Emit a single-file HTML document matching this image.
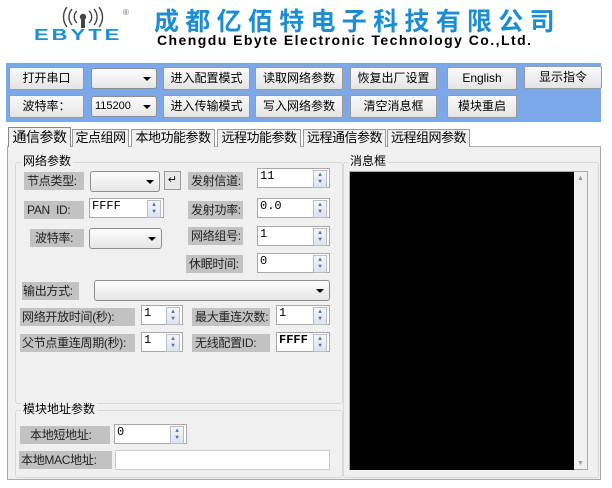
<!DOCTYPE html>
<html><head><meta charset="utf-8"><style>
*{box-sizing:border-box;margin:0;padding:0}
body{width:612px;height:488px;background:#fff;position:relative;overflow:hidden;font-family:"Liberation Sans","Noto Sans CJK SC",sans-serif;font-size:12px;color:#000}
.a{position:absolute}
.btn{position:absolute;height:23px;border:1px solid #9a9a9a;border-radius:2px;background:linear-gradient(#fafafa,#e4e4e4);text-align:center;line-height:21px;font-size:12px}
.cb{position:absolute;height:21px;border:1px solid #8e8e8e;border-radius:3px;background:linear-gradient(#fdfdfd,#e6e6e6);font-size:11px;line-height:19px;padding-left:3px}
.cb:after{content:"";position:absolute;right:5px;top:8px;border:4px solid transparent;border-top:4px solid #000;border-bottom:0}
.lb{position:absolute;background:#c2c2c2;height:18px;line-height:18px;font-size:12px;color:#222;padding-left:3px;white-space:nowrap;overflow:hidden;letter-spacing:-0.3px}
.sp{position:absolute;height:20px;border:1px solid #a8a8a8;background:#fff;font-family:"Liberation Mono","Noto Sans CJK SC",monospace;font-size:12px;line-height:15px;padding-left:2px}
.sp:after{content:"▲\A▼";white-space:pre;position:absolute;right:2px;top:1px;width:12px;height:16px;border:1px solid #b8bcc8;background:linear-gradient(#f4f6fa,#dde3ee);font-size:6px;line-height:7px;text-align:center;color:#5a6a9a}
.tab{position:absolute;top:129px;height:18px;border:1px solid #999;border-bottom:none;background:#f0f0f0;font-size:13px;line-height:16px;text-align:center;white-space:nowrap;letter-spacing:-0.5px}
</style></head><body>
<svg class="a" style="left:55px;top:7px" width="56" height="22" viewBox="0 0 56 22" fill="none" stroke="#444" stroke-width="1.4">
<path d="M22 4a8 8 0 0 0 0 12M17 2a12 12 0 0 0 0 16M12 0a16 16 0 0 0 0 20M34 4a8 8 0 0 1 0 12M39 2a12 12 0 0 1 0 16M44 0a16 16 0 0 1 0 20"/>
<circle cx="28" cy="10" r="2.5" fill="#444"/><rect x="26" y="13" width="4" height="8" fill="#444" stroke="none"/></svg>
<div class="a" style="left:123px;top:8px;font-size:8px;color:#666">®</div>
<div class="a" style="left:34px;top:24px;font:bold 22px/22px 'Liberation Sans',sans-serif;color:#1a8fd6;letter-spacing:3px;transform:scaleY(0.72);transform-origin:0 50%">EBYTE</div>
<div class="a" style="left:154px;top:4px;font-size:25px;font-weight:bold;color:#1c8dd3;letter-spacing:6.3px;font-family:'Noto Sans CJK SC',sans-serif;line-height:32px;white-space:nowrap">成都亿佰特电子科技有限公司</div>
<div class="a" style="left:157px;top:32px;font:bold 14px 'Liberation Sans',sans-serif;letter-spacing:1.45px;white-space:nowrap">Chengdu Ebyte Electronic Technology Co.,Ltd.</div>
<div class="a" style="left:6px;top:63px;width:595px;height:59px;background:#7ca7e9"></div>
<div class="btn" style="left:9px;top:67px;width:75px;border-color:#6aa8d8">打开串口</div>
<div class="cb" style="left:91px;top:68px;width:66px"></div>
<div class="btn" style="left:163px;top:67px;width:87px">进入配置模式</div>
<div class="btn" style="left:255px;top:67px;width:88px">读取网络参数</div>
<div class="btn" style="left:350px;top:67px;width:87px">恢复出厂设置</div>
<div class="btn" style="left:447px;top:67px;width:70px">English</div>
<div class="btn" style="left:524px;top:66px;width:78px">显示指令</div>
<div class="btn" style="left:9px;top:95px;width:75px">波特率：</div>
<div class="cb" style="left:91px;top:96px;width:66px">115200</div>
<div class="btn" style="left:163px;top:95px;width:87px">进入传输模式</div>
<div class="btn" style="left:255px;top:95px;width:88px">写入网络参数</div>
<div class="btn" style="left:350px;top:95px;width:87px">清空消息框</div>
<div class="btn" style="left:447px;top:95px;width:70px">模块重启</div>
<div class="a" style="left:7px;top:146px;width:594px;height:334px;background:#f0f0f0;border:1px solid #aaa"></div>
<div class="tab" style="left:8px;top:127px;width:63px;height:20px;border-color:#888;line-height:19px;font-size:14px">通信参数</div>
<div class="tab" style="left:72px;width:57px">定点组网</div>
<div class="tab" style="left:131px;width:84px">本地功能参数</div>
<div class="tab" style="left:217px;width:84px">远程功能参数</div>
<div class="tab" style="left:303px;width:83px">远程通信参数</div>
<div class="tab" style="left:387px;width:83px">远程组网参数</div>
<div class="a" style="left:8px;top:147px;width:62px;height:2px;background:#f0f0f0"></div>
<div class="a" style="left:15px;top:162px;width:328px;height:242px;border:1px solid #d8d8d8;border-radius:3px"></div>
<div class="a" style="left:21px;top:152px;background:#f0f0f0;padding:0 2px;font-size:12px">网络参数</div>
<div class="lb" style="left:24px;top:172px;width:60px">节点类型:</div>
<div class="cb" style="left:90px;top:171px;width:70px"></div>
<div class="a" style="left:164px;top:171px;width:17px;height:19px;border:1px solid #999;background:#e8e8e8;font-size:11px;text-align:center;line-height:17px">↵</div>
<div class="lb" style="left:188px;top:172px;width:55px">发射信道:</div>
<div class="sp" style="left:257px;top:168px;width:73px">11</div>
<div class="lb" style="left:24px;top:201px;width:60px;padding-left:3px">PAN&nbsp; ID:</div>
<div class="sp" style="left:89px;top:198px;width:75px">FFFF</div>
<div class="lb" style="left:188px;top:201px;width:55px">发射功率:</div>
<div class="sp" style="left:257px;top:198px;width:73px">0.0</div>
<div class="lb" style="left:30px;top:229px;width:54px;padding-left:5px">波特率:</div>
<div class="cb" style="left:89px;top:228px;width:73px"></div>
<div class="lb" style="left:188px;top:227px;width:55px">网络组号:</div>
<div class="sp" style="left:257px;top:226px;width:73px">1</div>
<div class="lb" style="left:186px;top:255px;width:57px">休眠时间:</div>
<div class="sp" style="left:257px;top:253px;width:73px">0</div>
<div class="lb" style="left:22px;top:282px;width:57px;padding-left:1px">输出方式:</div>
<div class="cb" style="left:94px;top:280px;width:236px"></div>
<div class="lb" style="left:20px;top:308px;width:115px;padding-left:2px">网络开放时间(秒):</div>
<div class="sp" style="left:141px;top:305px;width:42px">1</div>
<div class="lb" style="left:192px;top:308px;width:78px">最大重连次数:</div>
<div class="sp" style="left:276px;top:305px;width:54px">1</div>
<div class="lb" style="left:20px;top:334px;width:115px;padding-left:2px">父节点重连周期(秒):</div>
<div class="sp" style="left:141px;top:332px;width:42px">1</div>
<div class="lb" style="left:192px;top:334px;width:78px">无线配置ID:</div>
<div class="sp" style="left:276px;top:332px;width:54px;font-weight:bold">FFFF</div>
<div class="a" style="left:15px;top:410px;width:328px;height:68px;border:1px solid #d8d8d8;border-radius:3px"></div>
<div class="a" style="left:21px;top:400px;background:#f0f0f0;padding:0 2px;font-size:12px">模块地址参数</div>
<div class="lb" style="left:20px;top:426px;width:90px;padding-left:10px">本地短地址:</div>
<div class="sp" style="left:114px;top:424px;width:73px">0</div>
<div class="lb" style="left:19px;top:451px;width:93px;padding-left:2px">本地MAC地址:</div>
<div class="a" style="left:115px;top:450px;width:215px;height:20px;border:1px solid #ccc;background:#fff"></div>
<div class="a" style="left:343px;top:162px;width:256px;height:316px;border:1px solid #d8d8d8;border-radius:3px"></div>
<div class="a" style="left:348px;top:152px;background:#f0f0f0;padding:0 2px;font-size:12px">消息框</div>
<div class="a" style="left:349px;top:171px;width:239px;height:299px;border:1px solid #aaa;background:#f0f0f0"></div>
<div class="a" style="left:350px;top:172px;width:224px;height:298px;background:#000"></div>
<div class="a" style="left:577px;top:175px;font-size:7px;color:#999">▲</div>
<div class="a" style="left:577px;top:460px;font-size:7px;color:#999">▼</div>
</body></html>
